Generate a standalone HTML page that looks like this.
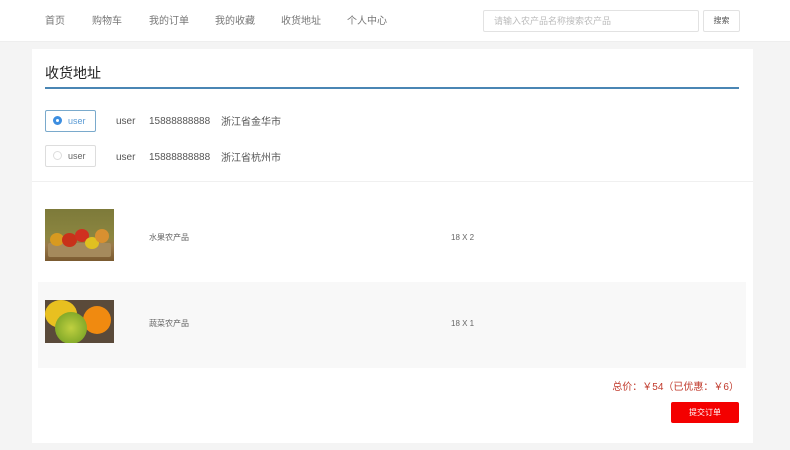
<!DOCTYPE html>
<html><head><meta charset="utf-8"><style>
*{margin:0;padding:0;box-sizing:border-box}
body{width:790px;height:450px;background:#f4f4f4;font-family:"Liberation Sans","Noto Sans CJK SC",sans-serif;position:relative;overflow:hidden;color:#555}
.hdr{position:absolute;left:0;top:0;width:790px;height:42px;background:#fff;border-bottom:1px solid #eee}
.nav{position:absolute;top:15px;font-size:10px;line-height:14px;color:#777}
.search{position:absolute;left:483px;top:10px;width:216px;height:22px;border:1px solid #e2e2e2;border-radius:2px;font-size:9px;line-height:12px;color:#bbb;padding:4px 10px}
.sbtn{position:absolute;left:703px;top:10px;width:37px;height:22px;border:1px solid #e2e2e2;border-radius:2px;font-size:8px;color:#555;text-align:center;line-height:20px}
.card{position:absolute;left:32px;top:49px;width:721px;height:394px;background:#fff}
.title{position:absolute;left:45px;top:64px;font-size:14px;line-height:18px;color:#222}
.line{position:absolute;left:45px;top:87px;width:694px;height:2px;background:#4a86b4}
.rb{position:absolute;left:45px;width:51px;height:22px;border:1px solid #ddd;border-radius:2px;font-size:9px;color:#666;padding-left:22px;line-height:20px}
.rb.on{border-color:#7aaacc;color:#5b9bd5}
.dot{position:absolute;left:7px;top:5px;width:9px;height:9px;border-radius:50%;border:1px solid #ddd}
.on .dot{border:3px solid #3d8ee0;background:#fff}
.t{position:absolute;font-size:10px;line-height:14px;color:#555}
.c{position:absolute;font-size:10px;line-height:14px;color:#555}
.s{position:absolute;font-size:8px;line-height:10px;color:#666}
.img{position:absolute;left:45px;width:69px}
</style></head><body>
<div class="hdr">
<span class="nav" style="left:45px">首页</span>
<span class="nav" style="left:92px">购物车</span>
<span class="nav" style="left:149px">我的订单</span>
<span class="nav" style="left:215px">我的收藏</span>
<span class="nav" style="left:281px">收货地址</span>
<span class="nav" style="left:347px">个人中心</span>
<div class="search">请输入农产品名称搜索农产品</div>
<div class="sbtn">搜索</div>
</div>
<div class="card"></div>
<div class="title">收货地址</div>
<div class="line"></div>
<div class="rb on" style="top:110px"><span class="dot"></span>user</div>
<div class="t" style="left:116px;top:115px">user</div>
<div class="t" style="left:149px;top:115px">15888888888</div>
<div class="c" style="left:221px;top:116px">浙江省金华市</div>
<div class="rb" style="top:145px"><span class="dot"></span>user</div>
<div class="t" style="left:116px;top:151px">user</div>
<div class="t" style="left:149px;top:151px">15888888888</div>
<div class="c" style="left:221px;top:152px">浙江省杭州市</div>
<div style="position:absolute;left:32px;top:181px;width:721px;height:1px;background:#f0f0f0"></div>
<div class="img" style="top:209px;height:52px;background:linear-gradient(#7d7a3a,#8c8640 55%,#9a7a4a 70%,#7a5a30);overflow:hidden">
<div style="position:absolute;left:3px;top:34px;width:63px;height:14px;background:#a58a5c;border-radius:2px"></div>
<div style="position:absolute;left:5px;top:24px;width:14px;height:13px;border-radius:50%;background:#d89a20"></div>
<div style="position:absolute;left:17px;top:24px;width:15px;height:14px;border-radius:50%;background:#c8321a"></div>
<div style="position:absolute;left:30px;top:20px;width:14px;height:13px;border-radius:50%;background:#d03020"></div>
<div style="position:absolute;left:40px;top:28px;width:14px;height:12px;border-radius:50%;background:#e0c020"></div>
<div style="position:absolute;left:50px;top:20px;width:14px;height:14px;border-radius:50%;background:#d89030"></div>
</div>
<div class="s" style="left:149px;top:233px">水果农产品</div>
<div class="s" style="left:451px;top:233px">18 X 2</div>
<div style="position:absolute;left:38px;top:282px;width:708px;height:86px;background:#f8f8f8"></div>
<div class="img" style="top:300px;height:43px;background:#5a4a3a;overflow:hidden">
<div style="position:absolute;left:0;top:0;width:32px;height:28px;border-radius:50%;background:#e8c020"></div>
<div style="position:absolute;left:38px;top:6px;width:28px;height:28px;border-radius:50%;background:#f08a10"></div>
<div style="position:absolute;left:10px;top:12px;width:32px;height:32px;border-radius:50%;background:radial-gradient(#c0d040,#6a9a20)"></div>
</div>
<div class="s" style="left:149px;top:319px">蔬菜农产品</div>
<div class="s" style="left:451px;top:319px">18 X 1</div>
<div style="position:absolute;right:51px;top:381px;font-size:10px;line-height:14px;color:#c0392b">总价：￥54（已优惠：￥6）</div>
<div style="position:absolute;left:671px;top:402px;width:68px;height:21px;background:#f40000;border-radius:2px;color:#fff;font-size:8px;text-align:center;line-height:21px">提交订单</div>
</body></html>
